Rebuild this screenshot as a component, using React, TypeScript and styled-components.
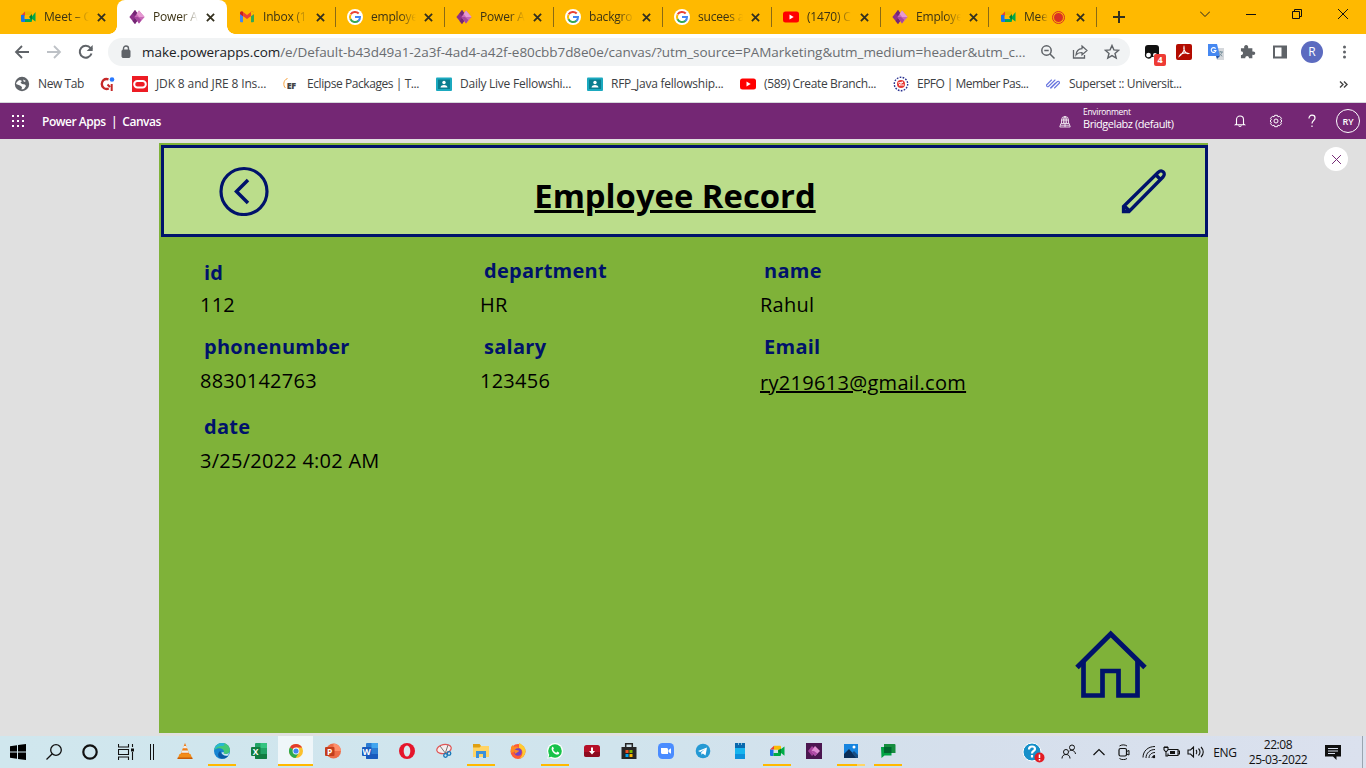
import React from 'react';
import styled, { createGlobalStyle, css } from 'styled-components';

const navy = '#00126b';

const GlobalStyle = createGlobalStyle`
  * { box-sizing: border-box; }
  html, body { margin: 0; padding: 0; overflow: hidden; }
  body { font-family: "Open Sans", "Noto Sans", sans-serif; }
  svg { display: block; flex: none; }
`;

const Screen = styled.div`
  width: 1366px;
  height: 768px;
  display: flex;
  flex-direction: column;
  background: #e0e0e0;
  overflow: hidden;
`;

/* ---------- browser tabs ---------- */
const TabStrip = styled.div`
  height: 34px;
  flex: none;
  display: flex;
  padding-left: 8px;
  background: #ffb900;
`;
const Tab = styled.div<{ $active?: boolean; $line?: boolean; $w?: number }>`
  position: relative;
  width: ${p => p.$w ?? 109}px;
  flex: none;
  display: flex;
  align-items: center;
  padding-left: 12px;
  ${p => p.$line && css`
    &::after {
      content: '';
      position: absolute;
      right: -1px;
      top: 7px;
      width: 1px;
      height: 20px;
      background: #8a6a14;
    }
  `}
  ${p => p.$active && css`
    background: #fff;
    border-radius: 8px 8px 0 0;
    &::before, &::after {
      content: '';
      position: absolute;
      bottom: 0;
      width: 8px;
      height: 8px;
    }
    &::before { left: -8px; background: radial-gradient(circle at 0 0, transparent 7.5px, #fff 8px); }
    &::after { right: -8px; background: radial-gradient(circle at 100% 0, transparent 7.5px, #fff 8px); }
  `}
`;
const TabTitle = styled.span<{ $w?: number }>`
  margin-left: 8px;
  width: ${p => p.$w ?? 45}px;
  white-space: nowrap;
  font-size: 12px;
  letter-spacing: -0.2px;
  line-height: 18px;
  color: #3c3314;
  mask-image: linear-gradient(to right, #000 65%, transparent 100%);
`;
const TabClose = styled.span`
  width: 10px;
  margin-left: 8px;
  color: #3a3010;
`;
const RecDot = styled.span`
  width: 11px;
  height: 11px;
  margin: 0 4px 0 5px;
  border-radius: 50%;
  background: #d93025;
  border: 1px solid #ffb900;
  outline: 1px solid #d93025;
`;
const NewTab = styled.div`
  display: flex;
  align-items: center;
  margin-left: 17px;
`;
const WindowButtons = styled.div`
  margin-left: auto;
  display: flex;
  padding: 9px 18px 0 0;
  gap: 36px;
`;

/* ---------- address row ---------- */
const Toolbar = styled.div`
  height: 36px;
  flex: none;
  display: flex;
  align-items: center;
  padding: 0 14px 0 14px;
  background: #fff;
`;
const NavButtons = styled.div`
  display: flex;
  gap: 16px;
  width: 94px;
`;
const AddressBar = styled.div`
  width: 1022px;
  flex: none;
  height: 28px;
  border-radius: 14px;
  background: #f1f3f4;
  display: flex;
  align-items: center;
  padding: 0 10px 0 13px;
`;
const Url = styled.span`
  width: 887px;
  flex: none;
  margin-left: 11px;
  white-space: nowrap;
  font-size: 13.5px;
  letter-spacing: -0.062px;
  line-height: 20px;
  color: #6a6d71;
  b { color: #202124; font-weight: 400; }
`;
const AddressIcons = styled.div`
  display: flex;
  gap: 16px;
  margin-left: 11px;
`;
const Extensions = styled.div`
  display: flex;
  align-items: center;
  gap: 16px;
  margin-left: 14px;
`;
const Avatar = styled.span`
  width: 22px;
  height: 22px;
  margin-left: -3px;
  margin-right: -3px;
  border-radius: 50%;
  background: #5c6bc0;
  color: #fff;
  font-size: 12px;
  line-height: 22px;
  text-align: center;
`;
const BadgedIcon = styled.span`
  position: relative;
  width: 16px;
  height: 16px;
`;
const Badge = styled.span`
  position: absolute;
  left: 10px;
  top: 10px;
  width: 12px;
  height: 12px;
  border-radius: 2px;
  background: #ee3b35;
  color: #fff;
  font-size: 9px;
  font-weight: 700;
  line-height: 12px;
  text-align: center;
`;

/* ---------- bookmarks ---------- */
const Bookmarks = styled.div`
  height: 33px;
  flex: none;
  display: flex;
  padding: 0 18px 4px 14px;
  align-items: center;
  background: #fff;
  border-bottom: 1px solid #d5d7db;
`;
const Bookmark = styled.div<{ $w: number; $ls?: number }>`
  width: ${p => p.$w}px;
  flex: none;
  display: flex;
  align-items: center;
  gap: 8px;
  font-size: 12px;
  line-height: 18px;
  letter-spacing: ${p => p.$ls ?? -0.2}px;
  white-space: nowrap;
  color: #3c4043;
`;
const More = styled.span`
  margin-left: auto;
`;

/* ---------- Power Apps bar ---------- */
const AppBar = styled.div`
  height: 36px;
  flex: none;
  display: flex;
  align-items: center;
  padding: 0 6px 0 12px;
  background: #742774;
  color: #fff;
`;
const AppTitle = styled.span`
  margin-left: 18px;
  font-size: 12px;
  font-weight: 600;
  letter-spacing: -0.48px;
  white-space: pre;
`;
const Environment = styled.div`
  display: flex;
  align-items: center;
  gap: 12px;
  margin-left: auto;
  width: 174px;
`;
const EnvText = styled.div`
  display: flex;
  flex-direction: column;
  font-size: 11px;
  line-height: 14px;
  letter-spacing: -0.45px;
  white-space: nowrap;
  padding-bottom: 5px;
  small { font-size: 8.5px; line-height: 10px; letter-spacing: -0.3px; }
`;
const AppBarIcons = styled.div`
  display: flex;
  align-items: center;
  gap: 22px;
`;
const Persona = styled.span`
  width: 24px;
  height: 24px;
  margin-left: -5px;
  border: 1px solid #fff;
  border-radius: 50%;
  font-size: 9px;
  font-weight: 600;
  line-height: 23px;
  text-align: center;
`;

/* ---------- canvas app ---------- */
const Stage = styled.main`
  position: relative;
  height: 597px;
  flex: none;
  padding: 4px 158px 0 159px;
  background: #e0e0e0;
`;
const ClosePreview = styled.div`
  position: absolute;
  right: 18px;
  top: 8px;
  width: 24px;
  height: 24px;
  border-radius: 50%;
  background: #fff;
  display: flex;
  align-items: center;
  justify-content: center;
`;
const CanvasApp = styled.div`
  height: 590px;
  display: flex;
  flex-direction: column;
  background: #7fb239;
  padding: 2px 0 0 2px;
`;
const RecordHeader = styled.header`
  height: 92px;
  flex: none;
  display: flex;
  align-items: center;
  justify-content: space-between;
  border: 3px solid ${navy};
  background: #bbdd8b;
  padding: 0 38px 0 55px;
`;
const Title = styled.h1`
  margin: 9px 40px 0 0;
  font-size: 32.8px;
  line-height: 44px;
  font-weight: 700;
  color: #000;
  text-decoration: underline;
  text-decoration-thickness: 3px;
  text-underline-offset: 2px;
`;
const Fields = styled.section`
  display: grid;
  grid-template-columns: 280px 280px 280px;
  grid-template-rows: 76px 80px 76px;
  padding: 20px 0 0 39px;
`;
const Field = styled.div``;
const Label = styled.div<{ $drop?: number }>`
  margin: ${p => p.$drop ?? 0}px 0 ${p => 6 - (p.$drop ?? 0)}px 4px;
  font-size: 20px;
  line-height: 28px;
  font-weight: 700;
  letter-spacing: 0.27px;
  color: ${navy};
`;
const Value = styled.div<{ $link?: boolean }>`
  font-size: 20px;
  line-height: 28px;
  letter-spacing: 0.25px;
  color: #000;
  white-space: nowrap;
  ${p => p.$link && css`
    padding-top: 2px;
    letter-spacing: 0.3px;
    text-decoration: underline;
    text-decoration-thickness: 2px;
    text-underline-offset: 1px;
  `}
`;
const HomeRow = styled.div`
  margin: auto 61px 35px auto;
`;

/* ---------- taskbar ---------- */
const Taskbar = styled.footer`
  height: 32px;
  flex: none;
  display: flex;
  align-items: stretch;
  background: linear-gradient(to right, #d0e7ee 0%, #d0e4ed 45%, #d5dfec 70%, #dbe1ee 100%);
`;
const SystemSlot = styled.div<{ $w: number }>`
  width: ${p => p.$w}px;
  display: flex;
  align-items: center;
  justify-content: center;
`;
const TaskSlot = styled.div<{ $state?: 'open' | 'active' | 'stacked' }>`
  width: 37px;
  display: flex;
  align-items: center;
  justify-content: center;
  border: 0 solid transparent;
  border-width: 0 0.5px;
  background-clip: padding-box;
  background-repeat: no-repeat;
  background-image: ${p => p.$state === 'open' ? 'linear-gradient(#ffb900, #ffb900)'
    : p.$state === 'active' ? 'linear-gradient(#ffb900, #ffb900)'
    : p.$state === 'stacked' ? 'linear-gradient(to right, #ffb900 70%, #ffd566 70%)' : 'none'};
  background-size: ${p => (p.$state === 'active' ? '100%' : '28px')} 2px;
  background-position: 50% 28px;
  background-color: ${p => (p.$state === 'active' ? '#eff6f9' : 'transparent')};
  height: 30px;
`;
const Tray = styled.div`
  margin-left: auto;
  display: flex;
  align-items: center;
  font-size: 12px;
  color: #111;
`;
const TraySlot = styled.span<{ $w: number }>`
  width: ${p => p.$w}px;
  display: flex;
  justify-content: center;
  letter-spacing: -0.3px;
`;
const Clock = styled.div`
  width: 70px;
  display: flex;
  flex-direction: column;
  align-items: center;
  line-height: 15px;
  letter-spacing: -0.4px;
  padding-bottom: 1px;
`;
const ShowDesktop = styled.span`
  width: 4px;
  height: 32px;
  border-left: 1px solid #9ba5b0;
`;

/* ---------- icons ---------- */
const S = ({ s = 16, w, h, vb, children }: { s?: number; w?: number; h?: number; vb?: string; children: React.ReactNode }) => (
  <svg width={w ?? s} height={h ?? s} viewBox={vb ?? `0 0 ${w ?? s} ${h ?? s}`} fill="none">{children}</svg>
);
const Cross = ({ s = 8, c = '#33301f', t = 1.8 }: { s?: number; c?: string; t?: number }) => (
  <S s={s} vb="0 0 10 10"><path d="M1 1 9 9M9 1 1 9" stroke={c} strokeWidth={t * 10 / s} /></S>
);
const Meet = () => (
  <S><path d="M5 3h6v3.500H5z" fill="#fbbc04" />
    <path d="M1 6.500h3.500V13H2a1 1 0 0 1-1-1z" fill="#1a73e8" /><path d="M1 6.500 5 2.800v3.700z" fill="#ea4335" />
    <path d="M5 2.800h6a1 1 0 0 1 1 1V8L9 9V6.500H5z" fill="#fbbc04" /><path d="M4.500 10H9V7l3-1 3.500-2.500v9.300L12 10v2a1 1 0 0 1-1 1H4.500z" fill="#00ac47" />
    <path d="m9 8 3-2.500V11z" fill="#00832d" /></S>
);
const TabMeet = () => (
  <S><path d="M1 6.500 5 2.500v4z" fill="#ea4335" /><path d="M1 6h3.500v4H9v3H2a1 1 0 0 1-1-1z" fill="#1a73e8" />
    <path d="M5 2.500h6a1 1 0 0 1 1 1V6H5z" fill="#e8b400" /><path d="M5 10.500h4L12 7.500l3.500-4.500v9.500L12 10v2a1 1 0 0 1-1 1H5z" fill="#00a94b" />
    <path d="m9 8 3-3v6z" fill="#00832d" /></S>
);
const Power = () => (
  <S><path d="M6 1 0.4 8 6 15l5-7z" fill="#8c2f88" /><path d="m6 1 5 7-5 7-2.500-3L7 8 3.500 4.500z" fill="#742774" />
    <path d="M10 1.500 15.600 8 10 14.500 5.500 8z" fill="#c868b6" /><path d="m10 1.500 5.600 6.500H10L7.600 5z" fill="#e59ad2" /><path d="m5.500 8 4.500 6.500L12.300 11 9 8z" fill="#a5479d" /></S>
);
const Gmail = () => (
  <S><path d="M1 4v8.300c0 .5.4.9.9.9H4V7z" fill="#4285f4" /><path d="M15 4v8.300c0 .5-.4.9-.9.9H12V7z" fill="#34a853" />
    <path d="M1 4.200C1 2.700 2.600 2 3.800 2.800L8 6l4.200-3.200C13.400 2 15 2.700 15 4.200V5L8 10 1 5z" fill="#ea4335" /><path d="M12 3v4.200L15 5V4c0-1.400-1.800-2-3-1z" fill="#fbbc04" /><path d="M1 4v1l3 2.200V3C2.600 2 1 2.600 1 4z" fill="#c5221f" /></S>
);
const Google = () => (
  <S><circle cx="8" cy="8" r="8" fill="#fff" />
    <path d="M3.700 5.300A5.100 5.100 0 0 1 11.700 4.500" stroke="#ea4335" strokeWidth="2" /><path d="M3.600 10.500a5.100 5.100 0 0 1 0-5" stroke="#fbbc04" strokeWidth="2" />
    <path d="M11.500 11.700a5.100 5.100 0 0 1-8-1.400" stroke="#34a853" strokeWidth="2" /><path d="M8 8h5a5.100 5.100 0 0 1-1.700 3.900" stroke="#4285f4" strokeWidth="2" /></S>
);
const YouTube = () => (
  <S><rect y="2.500" width="16" height="11" rx="2.500" fill="#f00" /><path d="m6.500 5.500 4.200 2.500-4.200 2.500z" fill="#fff" /></S>
);
const Classroom = () => (
  <S><rect y="1.500" width="16" height="13.500" rx="1" fill="#1ba9bf" /><rect x="2" y="3.500" width="12" height="9.500" fill="#0a7d8f" />
    <circle cx="8" cy="6.500" r="1.700" fill="#fff" /><path d="M4.500 11.500c.3-2 2-2.600 3.500-2.600s3.200.6 3.500 2.600z" fill="#fff" /></S>
);
const Chrome = () => (
  <S s={16}><circle cx="8" cy="8" r="7" fill="#fbc02d" /><path d="M8 8 2 4.400A7 7 0 0 1 14.100 4.500H8z" fill="#e33b2e" /><path d="M8 8 1.900 4.500A7 7 0 0 0 7.500 15L11 9.700z" fill="#2da94f" /><circle cx="8" cy="8" r="3.400" fill="#fff" /><circle cx="8" cy="8" r="2.600" fill="#4285f4" /></S>
);
const Office = ({ c, d, l, t, round }: { c: string; d: string; l: string; t: string; round?: boolean }) => (
  <S w={16} h={16}>{round ? <><circle cx="8.500" cy="8" r="7.500" fill={c} /><path d="M8.500 .5A7.500 7.500 0 0 1 16 8H8.500z" fill={l} /></> : <><rect x="4" width="12" height="16" rx="1" fill={c} /><path d="M9.500 0H15a1 1 0 0 1 1 1v4H9.500z" fill={l} /><path d="M4 11h12v4a1 1 0 0 1-1 1H5a1 1 0 0 1-1-1z" fill={d} /></>}
    <rect y="4" width="9.500" height="9" rx="1" fill={d} /><text x="4.700" y="11.500" fontSize="8.500" fontWeight="700" fill="#fff" textAnchor="middle" fontFamily="Open Sans, sans-serif">{t}</text></S>
);

const tabs: { title: string; icon: React.ReactNode }[] = [
  { title: 'Meet – C', icon: <TabMeet /> },
  { title: 'Power A', icon: <Power /> },
  { title: 'Inbox (1', icon: <Gmail /> },
  { title: 'employe', icon: <Google /> },
  { title: 'Power A', icon: <Power /> },
  { title: 'backgro', icon: <Google /> },
  { title: 'sucees a', icon: <Google /> },
  { title: '(1470) C', icon: <YouTube /> },
  { title: 'Employe', icon: <Power /> },
  { title: 'Mee', icon: <TabMeet /> },
];

const bookmarks = [
  { text: 'New Tab', w: 86, ls: -0.4, icon: <S><circle cx="8" cy="8" r="7.200" fill="#5f6368" /><path d="M2 8c.5-2 2-3.500 4-4l2 1-1.500 1.500L8 8l3 .5 1 1.500-2 3-2.500.5.500-2.500-2-1.500z" fill="#fff" /><path d="m9 3.500 3 1.500-2 1z" fill="#fff" /></S> },
  { text: '', w: 32, icon: <S><path d="M8.500 3.300C4 2 1.800 5 1.800 8c0 3.500 3.200 6 7 4.500" stroke="#c62828" strokeWidth="2.400" /><path d="M7.500 8.500 10 11M11.700 8v7" stroke="#c62828" strokeWidth="2" /><circle cx="12" cy="3.500" r="2.300" fill="#2979ff" /></S> },
  { text: 'JDK 8 and JRE 8 Ins...', w: 151, ls: -0.13, icon: <S><path d="M0 0h16v16H0z" fill="#ed1c24" /><rect x="2.200" y="5" width="11.600" height="6.500" rx="3.200" stroke="#fff" strokeWidth="2" /></S> },
  { text: 'Eclipse Packages | T...', w: 153, ls: -0.43, icon: <S><path d="M4.500 2.500C0 4 0 10 2.500 12" stroke="#f7a13a" strokeWidth="1" /><text x="3.800" y="12.500" fontSize="9" fontWeight="800" fill="#444" fontFamily="Open Sans, sans-serif">EF</text></S> },
  { text: 'Daily Live Fellowshi...', w: 151, ls: -0.25, icon: <Classroom /> },
  { text: 'RFP_Java fellowship...', w: 153, ls: -0.25, icon: <Classroom /> },
  { text: '(589) Create Branch...', w: 153, ls: -0.36, icon: <YouTube /> },
  { text: 'EPFO | Member Pas...', w: 152, ls: -0.54, icon: <S><circle cx="8" cy="8" r="6.700" stroke="#28308f" strokeWidth="1.400" strokeDasharray="1.700 1.300" /><circle cx="8" cy="8" r="4" fill="#e53935" /><path d="m5 7 5-1-4 3h5" stroke="#fff" /></S> },
  { text: 'Superset :: Universit...', w: 145, ls: -0.37, icon: <S><path d="m1.500 9 5-5M3.500 10.500 10 4M8 9.500l-2.500 2.500M8 9.500 10.500 7M14.500 7l-5 5M12.500 5.500 6 12M1.500 9c0 1.500 1 2 2 1.500M14.500 7c0-1.500-1-2-2-1.500" stroke="#6976df" strokeWidth="1.100" strokeLinecap="round" /></S> },
];

const taskApps: { state?: 'open' | 'active' | 'stacked'; icon: React.ReactNode }[] = [
  { icon: <S><path d="m8 0 4.500 11h-9z" fill="#ef7d16" /><path d="m6.700 3-.9 2.300h4.400L9.300 3zM5 7.500l-.9 2.200h7.800L11 7.500z" fill="#eee" /><path d="M2.500 11h11l2 5H.5z" fill="#f28c18" /><path d="M.7 14.500h14.600l.2 1.500H.5z" fill="#c55b09" /></S> },
  { state: 'open', icon: <S><circle cx="8" cy="8" r="8" fill="#1684d2" /><path d="M.3 7C1 2.500 4.500 0 8.200 0 13 0 16 3.500 16 7c0 2.500-2 4-4.500 4-2 0-2.500-.8-1.500-2C10 5 4 4 .3 7z" fill="#42c879" /><path d="M.3 7C1 2.500 4.500 0 8.200 0c3 0 3 1.500 1 3-2.700 0-6 0-8.900 4z" fill="#27b8cf" /><path d="M6.500 8c0 3 3 5.500 7.700 4.700C12 16 8 16 6 15 3 13 4 9 6.500 8z" fill="#0c59a4" /><path d="M10 9c-1 1.200-.5 2 1.500 2 1.500 0 3-.5 3.800-1.500L14 12.500c-3 .8-6-.5-6.500-3z" fill="#d0e7ee" /></S> },
  { icon: <Office c="#21a366" d="#107c41" l="#33c481" t="X" /> },
  { state: 'active', icon: <Chrome /> },
  { icon: <Office c="#ed6c47" d="#c43e1c" l="#ff8f6b" t="P" round /> },
  { icon: <Office c="#2b7cd3" d="#185abd" l="#41a5ee" t="W" /> },
  { icon: <S><circle cx="8" cy="8" r="8" fill="#e5152b" /><ellipse cx="8" cy="8" rx="3.300" ry="5.500" fill="#d8e9ef" /></S> },
  { icon: <S><ellipse cx="8" cy="6" rx="7.300" ry="4.500" fill="#f5eeee" stroke="#e05555" strokeWidth="1.200" transform="rotate(-12 8 6)" /><path d="m4 3 6 8M12 2 9 11" stroke="#777" /><circle cx="9.500" cy="12.500" r="1.800" stroke="#1677b9" strokeWidth="1.300" /><circle cx="13" cy="10.500" r="1.800" stroke="#1677b9" strokeWidth="1.300" /></S> },
  { state: 'open', icon: <S><path d="M0 1h6.500L8 3h8v11H0z" fill="#ffd465" /><path d="M0 1h6.500L8 3 6.500 4.500H0z" fill="#dfa012" /><path d="M3 15V8h10v7h-3v-4H6v4z" fill="#3a91dc" /></S> },
  { icon: <S><circle cx="8" cy="8.500" r="7.500" fill="#ff5a36" /><path d="M9 0c3 1.500 6.500 4 6.500 8 0 4-3 7-6 7.500C14 12 13 6 9 5z" fill="#ffcb32" /><path d="M1 4c1-1 1.500-2 1.500-2l2 2C6 3 8 4 9 5L6 8l-5 2z" fill="#ff8a22" /><circle cx="8" cy="9" r="3.700" fill="#7542c4" /><path d="M4 7c2-1 3 .5 5 .5 0 2-3 1.500-3 3.500C5 10 4 9 4 7z" fill="#ff8a22" /></S> },
  { state: 'open', icon: <S><circle cx="8" cy="8" r="8" fill="#fff" /><path d="m.2 15.800 1.200-4.500 3 3z" fill="#fff" /><circle cx="8" cy="8" r="6.800" fill="#17c34a" /><path d="m1.500 14.500 1-3.500 2.500 2.500z" fill="#17c34a" /><path d="M5 4.200c.7-.6 1.200-.3 1.400.3l.5 1.200-.8 1c.8 1.500 1.700 2.300 3.200 3l1-1.100 1.700.8c.5.3.2 1.400-.5 1.900C9 12.800 3 8 5 4.200z" fill="#fff" /></S> },
  { icon: <S><rect y="2" width="16" height="12" rx="2.500" fill="#b50f27" /><path d="M0 9h16v2.500A2.500 2.500 0 0 1 13.500 14h-11A2.500 2.500 0 0 1 0 11.500z" fill="#8e0c20" /><path d="M7 4.500h2V8h2l-3 3.500L5 8h2z" fill="#fff" /></S> },
  { icon: <S><path d="M.5 4h15v12H.5z" fill="#252525" /><path d="M4.700 4V.8h6.600V4" stroke="#252525" strokeWidth="1.500" /><path d="M4.500 7h3v3h-3z" fill="#f25022" /><path d="M8.500 7h3v3h-3z" fill="#7fba00" /><path d="M4.500 11h3v3h-3z" fill="#00a4ef" /><path d="M8.500 11h3v3h-3z" fill="#ffb900" /></S> },
  { icon: <S><rect width="16" height="16" rx="4.500" fill="#4a8cff" /><path d="M3 5h5.500c1 0 1.500.6 1.500 1.500V11H4.500C3.500 11 3 10.400 3 9.500zm7.500 2L13 5.300v5.400L10.500 9z" fill="#fff" /></S> },
  { icon: <S><circle cx="8" cy="8" r="7.300" fill="#2499d4" /><path d="m3 8 9-3.500-1.500 8-2.700-2-1.300 1.200-.3-2.500 4-3.200-5 3z" fill="#fff" /></S> },
  { icon: <S><path d="M3 0h10v16H3z" fill="#0c90db" /><path d="M3 0h10v5H3z" fill="#0868ad" /><path d="M3 5h10v6H3z" fill="#16b4ee" /><path d="M6 1h1M9 1h1" stroke="#fff" /></S> },
  { state: 'open', icon: <Meet /> },
  { icon: <S><path d="M0 0h16v16H0z" fill="#4b1650" /><path d="M6 3 2 8l4 5 5-5z" fill="#a4409b" /><path d="m9 3 5 5-5 5-3.500-5z" fill="#e08fd3" /><path d="m5.500 8 3.500 5 2.500-2.500L8 8z" fill="#b14ba8" /></S> },
  { state: 'stacked', icon: <S><path d="M1 1h14v14H1z" fill="#1684df" /><path d="m1 11 5-5 8 9H1z" fill="#0a2e58" /><path d="m9 10 2-2 4 4v3h-2z" fill="#174d83" /><circle cx="11" cy="4" r="1.500" fill="#fff" /></S> },
  { state: 'open', icon: <S><path d="M4 1h10.500a1 1 0 0 1 1 1v8H4z" fill="#168d3f" /><path d="M1 4h10.500v8.500H4.500L1.500 15z" fill="#00a344" /><path d="M4 4h7.500v6H4z" fill="#00662f" /></S> },
];

const AppLauncher = () => (
  <S s={12}>{[0, 5, 10].flatMap(y => [0, 5, 10].map(x => <rect key={`${x}-${y}`} x={x} y={y} width="2" height="2" fill="#fff" />))}</S>
);

export default function App() {
  return (
    <Screen>
      <GlobalStyle />
      <TabStrip>
        {tabs.map((t, i) => (
          <Tab key={i} $active={i === 1} $line={i > 1} $w={i === 1 ? 110 : i === 2 || i === 8 || i === 9 ? 108 : 109}>
            {t.icon}
            <TabTitle $w={i === 9 ? 24 : undefined}>{t.title}</TabTitle>
            {i === 9 && <RecDot />}
            <TabClose><Cross s={9} /></TabClose>
          </Tab>
        ))}
        <NewTab><S s={12}><path d="M6 0v12M0 6h12" stroke="#33301f" strokeWidth="2" /></S></NewTab>
        <WindowButtons>
          <S w={10} h={12}><path d="m0 2.500 5 5 5-5" stroke="#222" /></S>
          <S w={10} h={12}><path d="M0 5.500h10" stroke="#111" /></S>
          <S w={10} h={12}><path d="M.5 2.500h7v7h-7zM2.500 2.500v-2h7v7h-2" stroke="#111" /></S>
          <S w={10} h={12}><path d="m0 0 10 10M10 0 0 10" stroke="#111" /></S>
        </WindowButtons>
      </TabStrip>

      <Toolbar>
        <NavButtons>
          <S><path d="M15 8H2M8 2 2 8l6 6" stroke="#5f6368" strokeWidth="1.800" /></S>
          <S><path d="M1 8h13M8 2l6 6-6 6" stroke="#bdc1c6" strokeWidth="1.800" /></S>
          <S><path d="M13.500 9.500A6 6 0 1 1 12.500 4L14 5.500" stroke="#5f6368" strokeWidth="2" /><path d="M14.700 1v6h-6z" fill="#5f6368" /></S>
        </NavButtons>
        <AddressBar>
          <S w={10} h={14}><rect x="1" y="5" width="8" height="7.500" rx="1" fill="#5f6368" stroke="#5f6368" /><path d="M2.500 5V3.500a2.500 2.500 0 0 1 5 0V5" stroke="#5f6368" strokeWidth="1.400" /></S>
          <Url><b>make.powerapps.com</b>/e/Default-b43d49a1-2a3f-4ad4-a42f-e80cbb7d8e0e/canvas/?utm_source=PAMarketing&amp;utm_medium=header&amp;utm_c...</Url>
          <AddressIcons>
            <S><circle cx="6.500" cy="6.500" r="4.700" stroke="#5f6368" strokeWidth="1.500" /><path d="m10 10 4.500 4.500M4.300 6.500h4.400" stroke="#5f6368" strokeWidth="1.500" /></S>
            <S><path d="M1.500 6v8h11v-3" stroke="#5f6368" strokeWidth="1.300" /><path d="m10 2 5 4.500L10 11V8.500C7.500 8.500 5.500 9 4 11c.3-4 2.500-6 6-6.300z" stroke="#5f6368" strokeWidth="1.200" /></S>
            <S><path d="m8 1.500 1.900 4.400 4.800.4-3.700 3.100 1.200 4.700L8 11.600l-4.200 2.500L5 9.400 1.300 6.300l4.800-.4z" stroke="#5f6368" strokeWidth="1.400" /></S>
          </AddressIcons>
        </AddressBar>
        <Extensions>
          <BadgedIcon><S><path d="M1 4a3 3 0 0 1 3-3h8a3 3 0 0 1 3 3v9H4a3 3 0 0 1-3-3z" fill="#111" /><circle cx="4.500" cy="11" r="3" fill="#fff" stroke="#111" strokeWidth="1.300" /><circle cx="11" cy="11" r="2" fill="#fff" /></S><Badge>4</Badge></BadgedIcon>
          <S><rect width="16" height="16" rx="2" fill="#b30b00" /><path d="M8 3c1 3-2 7-4.500 9 1-3 6-4 9-2.500C10 10 7 6 8 3z" stroke="#fff" strokeWidth="1.200" /></S>
          <S><path d="M6 4h10v12H9z" fill="#d5d8dc" /><path d="M0 0h9l3 12H0z" fill="#4688f1" /><path d="M8 12h4l-3 3z" fill="#2456a8" /><path d="M7.600 4.600A2.400 2.400 0 1 0 8 6.500H5.700" stroke="#fff" strokeWidth="1.100" /><path d="M10.500 8h4.500M12.700 7v1M14 8c-.5 2-2 3.500-3 4M11.500 9.500c.6 1.200 1.800 2.200 2.800 2.700" stroke="#78909c" /></S>
          <S><path d="M1 4.500h3.500C3.800 2.500 5 1 6.500 1S9.200 2.500 8.500 4.500H13V8c2-.6 3 .5 3 1.700s-1 2.200-3 1.700V15H9.500c0-3-4-3-4 0H1v-3.500c3 0 3-4 0-4z" fill="#5f6368" transform="scale(.95)" /></S>
          <S><path d="M2 2.500h12v11H2z" stroke="#5f6368" strokeWidth="2" /><path d="M9.500 2H15v12H9.500z" fill="#5f6368" /></S>
          <Avatar>R</Avatar>
          <S w={16} h={16}><circle cx="8.500" cy="3" r="1.500" fill="#5f6368" /><circle cx="8.500" cy="8" r="1.500" fill="#5f6368" /><circle cx="8.500" cy="13" r="1.500" fill="#5f6368" /></S>
        </Extensions>
      </Toolbar>

      <Bookmarks>
        {bookmarks.map((b, i) => <Bookmark key={i} $w={b.w} $ls={b.ls}>{b.icon}{b.text}</Bookmark>)}
        <More><S s={9}><path d="m1 1.500 3 3-3 3M5 1.500l3 3-3 3" stroke="#444" strokeWidth="1.400" /></S></More>
      </Bookmarks>

      <AppBar>
        <AppLauncher />
        <AppTitle>Power Apps  |  Canvas</AppTitle>
        <Environment>
          <S w={12} h={13}><path d="M2.500 8V5a3.500 3.500 0 0 1 7 0v3M6 1.500V8M2.500 5h7M4.500 8c-.5-3 0-5 1.500-6.500C7.500 3 8 5 7.500 8M1.800 8.500h8.400l1 3.500H.8zM6 8.500V12M1.500 10.200h9" stroke="#fff" strokeWidth=".8" /></S>
          <EnvText><small>Environment</small>Bridgelabz (default)</EnvText>
        </Environment>
        <AppBarIcons>
          <S w={14} h={14}><path d="M3.500 10V5.500a3.500 3.500 0 0 1 7 0V10l1 .8h-9zM5.700 11.500c.3 1.300 2.300 1.300 2.600 0" stroke="#fff" strokeWidth="1.100" /></S>
          <S s={14}><path d="M5.600 1.300h2.800l.5 1.500 1.700-.5 1.800 1.900-.7 1.600 1.300 1.200-1.300 1.200.7 1.600-1.800 1.900-1.700-.5-.5 1.500H5.600l-.5-1.500-1.700.5-1.800-1.900.7-1.600L1 7l1.300-1.200-.7-1.600 1.800-1.900 1.700.5z" stroke="#fff" strokeWidth="1" strokeLinejoin="round" /><circle cx="7" cy="7" r="2" stroke="#fff" /></S>
          <S w={14} h={14}><path d="M4 4.500C4 2.500 5.200 1.200 7 1.200s3 1.100 3 2.700C10 6.500 7 6.500 7 9.500M7 11.500V13" stroke="#fff" strokeWidth="1.200" /></S>
          <Persona>RY</Persona>
        </AppBarIcons>
      </AppBar>

      <Stage>
        <CanvasApp>
          <RecordHeader>
            <S s={50}><circle cx="25" cy="25.500" r="23" stroke={navy} strokeWidth="3.200" /><path d="M29 14 17.500 25.500 29 37" stroke={navy} strokeWidth="3.500" /></S>
            <Title>Employee Record</Title>
            <S s={46}><path d="M2.500 43.500v-5L37 4.500c4-4 8.500 1 5 4.500L8 43.500zM3 37.500l6 6M34.500 6.500l5.500 5.500" stroke={navy} strokeWidth="3.300" /></S>
          </RecordHeader>
          <Fields>
            <Field><Label $drop={2}>id</Label><Value>112</Value></Field>
            <Field><Label>department</Label><Value>HR</Value></Field>
            <Field><Label>name</Label><Value>Rahul</Value></Field>
            <Field><Label>phonenumber</Label><Value>8830142763</Value></Field>
            <Field><Label>salary</Label><Value>123456</Value></Field>
            <Field><Label>Email</Label><Value $link>ry219613@gmail.com</Value></Field>
            <Field><Label>date</Label><Value>3/25/2022 4:02 AM</Value></Field>
          </Fields>
          <HomeRow>
            <S w={72} h={68}><path d="M2 37.500 35.700 4 70 37.500" stroke={navy} strokeWidth="5" /><path d="M8.500 31v34.500h19V41h16v24.500h19V31" stroke={navy} strokeWidth="4.700" /></S>
          </HomeRow>
        </CanvasApp>
        <ClosePreview><Cross s={11} c="#742774" t={1} /></ClosePreview>
      </Stage>

      <Taskbar>
        <SystemSlot $w={36}><S><path d="M0 2.200 7 1.200v6.300H0zM8 1l8-1v7.500H8zM0 8.500h7v6.300l-7-1zM8 8.500h8V16l-8-1z" fill="#000" /></S></SystemSlot>
        <SystemSlot $w={36}><S><circle cx="10" cy="6" r="5.300" stroke="#111" strokeWidth="1.300" /><path d="M6.300 9.800.5 15.500" stroke="#111" strokeWidth="1.300" /></S></SystemSlot>
        <SystemSlot $w={36}><S><circle cx="8" cy="8" r="6.700" stroke="#111" strokeWidth="2.200" /></S></SystemSlot>
        <SystemSlot $w={35}><S><path d="M.5 0v3h10V0M.5 16v-3h10v3M.5 5.500h10v5H.5zM14.500 0v3M14.500 8v8" stroke="#111" strokeWidth="1.100" /><path d="M13 4.500h3v3h-3z" fill="#111" /></S></SystemSlot>
        <SystemSlot $w={18}><S w={4} h={16}><path d="M.5 0v16M3.500 0v16" stroke="#111" /></S></SystemSlot>
        <SystemSlot $w={5} />
        {taskApps.map((t, i) => <TaskSlot key={i} $state={t.state}>{t.icon}</TaskSlot>)}
        <Tray>
          <TraySlot $w={36}><S w={23} h={21}><circle cx="10" cy="10" r="9" fill="#168fc9" stroke="#fff" /><path d="M7 7.500C7 5.500 8.300 4.500 10 4.500s3 1 3 2.500c0 2-3 2-3 4.500M10 13v2.500" stroke="#fff" strokeWidth="2.200" /><circle cx="17.500" cy="15.500" r="5" fill="#e31b23" /><path d="M17.500 12.500v3.500M17.500 17v1.500" stroke="#fff" strokeWidth="1.500" /></S></TraySlot>
          <TraySlot $w={36}><S><circle cx="5" cy="8" r="2.500" stroke="#111" /><circle cx="11" cy="3.500" r="2.500" stroke="#111" /><path d="M1 14.500c0-2.500 1.500-4 4-4s4 1.500 4 4M8.500 7c2-1.500 5.500-.5 6 3" stroke="#111" /></S></TraySlot>
          <TraySlot $w={24}><S w={12} h={8}><path d="m.5 7 5.500-5.500L11.500 7" stroke="#111" strokeWidth="1.200" /></S></TraySlot>
          <TraySlot $w={26}><S><rect x="3" y="4.500" width="7.500" height="7.500" rx="1.500" stroke="#111" strokeWidth="1.200" /><path d="m10.500 7.500 2.500-1v4.500l-2.500-1M3.500 2c2-1.500 5.500-1.500 7.500 0M3.500 14.500c2 1.500 5.500 1.500 7.500 0" stroke="#111" /></S></TraySlot>
          <TraySlot $w={23}><S s={14}><path d="M1 12.500C1 6 6 1.500 13 1.500M4 13c0-5 4-8.500 9-8.500M7 13c0-3.500 3-5.500 6-5.500M10 13c0-1.500 1.500-2.500 3-2.500" stroke="#111" /><circle cx="12" cy="12" r="1.200" fill="#111" /></S></TraySlot>
          <TraySlot $w={23}><S w={17} h={12}><path d="M4.500 3.500h10.500v6h-10v-2M15 5h1.500v3H15M1 1.500h4v2.300L3.500 5.500h-1L1 3.800zM2 0v2M4 0v2M3 5.500V10h2" stroke="#111" strokeWidth="1.100" /><path d="M7 5h5v3H7z" fill="#111" /></S></TraySlot>
          <TraySlot $w={24}><S w={17} h={14}><path d="M1 5h2.500L6.500 2v10l-3-3H1zM9 5c1 1 1 3 0 4M11.500 3.500c2 2 2 5 0 7M14 2c3 3 3 7 0 10" stroke="#111" strokeWidth="1.100" /></S></TraySlot>
          <TraySlot $w={36}>ENG</TraySlot>
          <Clock><span>22:08</span><span>25-03-2022</span></Clock>
          <TraySlot $w={39}><S><path d="M0 1h16v11.500h-4.500V16L8 12.500H0z" fill="#111" /><path d="M3 4.500h10M3 7h10M3 9.500h7" stroke="#dbe1ee" /></S></TraySlot>
          <TraySlot $w={10} />
          <ShowDesktop />
        </Tray>
      </Taskbar>
    </Screen>
  );
}
